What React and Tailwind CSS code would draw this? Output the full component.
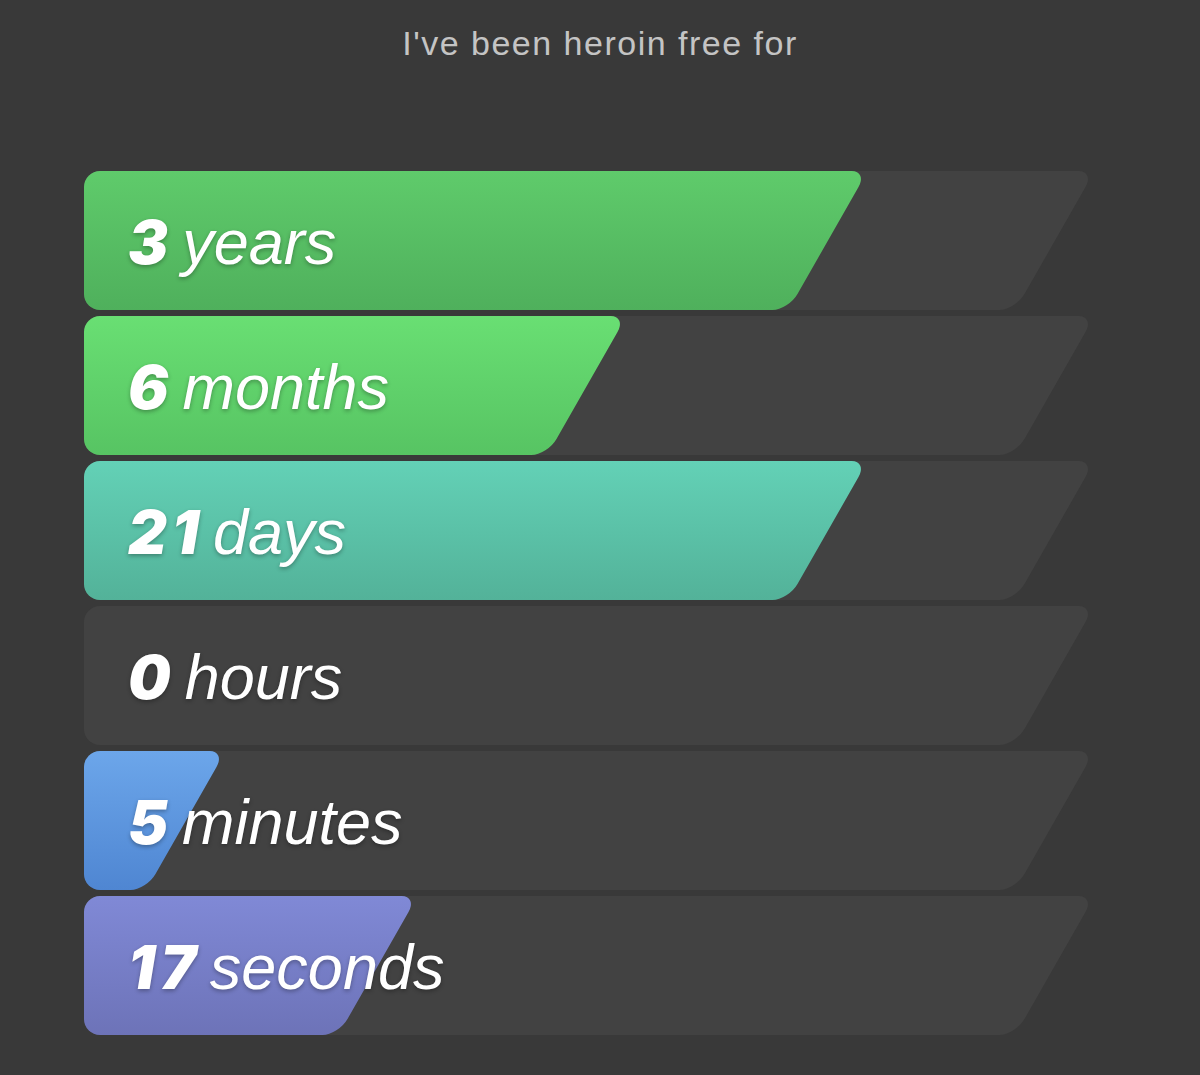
import React from 'react'

const rows = [
  { num: '3', unit: 'years', fill: 'w-[844px] bg-gradient-to-b from-[#5fcb6b] to-[#4fb05c]' },
  { num: '6', unit: 'months', fill: 'w-[603px] bg-gradient-to-b from-[#69df73] to-[#57c463]' },
  { num: '21', unit: 'days', fill: 'w-[844px] bg-gradient-to-b from-[#63d1b6] to-[#53b299]' },
  { num: '0', unit: 'hours', fill: null },
  { num: '5', unit: 'minutes', fill: 'w-[202px] bg-gradient-to-b from-[#6ca6ea] to-[#4f86d2]' },
  { num: '17', unit: 'seconds', fill: 'w-[394px] bg-gradient-to-b from-[#8089d6] to-[#6d73b8]' },
]

function Bar({ num, unit, fill }) {
  return (
    <div className="relative flex h-[139px] w-[1016px] items-center overflow-hidden rounded-l-2xl">
      {/* track */}
      <div className="absolute inset-y-0 left-[-100px] w-[1071px] skew-x-[-29.7deg] rounded-2xl bg-[#424242]" />
      {/* progress */}
      {fill && (
        <div className={'absolute inset-y-0 left-[-100px] skew-x-[-29.7deg] rounded-2xl ' + fill} />
      )}
      <div className="relative flex items-baseline pl-[44px] pt-[4px] leading-none italic text-white [text-shadow:0_2px_4px_rgba(0,0,0,0.3)]">
        <span className="text-[60px] font-black tracking-[5px] [font-family:Inter,'Liberation_Sans',sans-serif]">{num}</span>
        <span className="pl-[9px] text-[63px] font-normal [font-family:'Liberation_Sans',Arial,sans-serif]">{unit}</span>
      </div>
    </div>
  )
}

export default function App() {
  return (
    <div className="min-h-screen bg-[#393939] pt-[27px] pb-[40px]">
      <h1 className="text-center text-[34px] leading-[33px] tracking-[1.5px] text-[#c4c4c4] [font-family:'Liberation_Sans',Arial,sans-serif]">
        I've been heroin free for
      </h1>
      <div className="mt-[111px] flex flex-col gap-[6px] pl-[84px]">
        {rows.map((r) => (
          <Bar key={r.unit} {...r} />
        ))}
      </div>
    </div>
  )
}
